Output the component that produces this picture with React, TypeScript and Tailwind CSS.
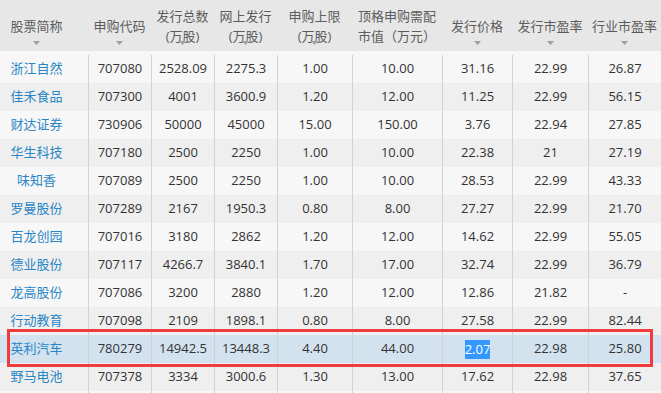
import React from "react";

const cols = "grid grid-cols-[88px_63px_63px_63px_75px_90px_70px_76px_1fr]";

const headers: { lines: string[]; arrow: boolean; pr?: boolean }[] = [
  { lines: ["股票简称"], arrow: true, pr: true },
  { lines: ["申购代码"], arrow: true },
  { lines: ["发行总数", "(万股)"], arrow: true },
  { lines: ["网上发行", "(万股)"], arrow: true },
  { lines: ["申购上限", "(万股)"], arrow: true },
  { lines: ["顶格申购需配", "市值（万元）"], arrow: false },
  { lines: ["发行价格"], arrow: true },
  { lines: ["发行市盈率"], arrow: true },
  { lines: ["行业市盈率"], arrow: true },
];

const rows: string[][] = [
  ["浙江自然", "707080", "2528.09", "2275.3", "1.00", "10.00", "31.16", "22.99", "26.87"],
  ["佳禾食品", "707300", "4001", "3600.9", "1.20", "12.00", "11.25", "22.99", "56.15"],
  ["财达证券", "730906", "50000", "45000", "15.00", "150.00", "3.76", "22.94", "27.85"],
  ["华生科技", "707180", "2500", "2250", "1.00", "10.00", "22.38", "21", "27.19"],
  ["味知香", "707089", "2500", "2250", "1.00", "10.00", "28.53", "22.99", "43.33"],
  ["罗曼股份", "707289", "2167", "1950.3", "0.80", "8.00", "27.27", "22.99", "21.70"],
  ["百龙创园", "707016", "3180", "2862", "1.20", "12.00", "14.62", "22.99", "55.05"],
  ["德业股份", "707117", "4266.7", "3840.1", "1.70", "17.00", "32.74", "22.99", "36.79"],
  ["龙高股份", "707086", "3200", "2880", "1.20", "12.00", "12.86", "21.82", "-"],
  ["行动教育", "707098", "2109", "1898.1", "0.80", "8.00", "27.58", "22.99", "82.44"],
  ["英利汽车", "780279", "14942.5", "13448.3", "4.40", "44.00", "2.07", "22.98", "25.80"],
  ["野马电池", "707378", "3334", "3000.6", "1.30", "13.00", "17.62", "22.98", "37.65"],
  ["", "", "", "", "", "", "", "", ""],
];

function Arrow() {
  return (
    <span className="absolute left-0 right-0 top-[41px] flex justify-center">
      <svg width="7" height="4" viewBox="0 0 7 4">
        <path d="M0 0 L7 0 L3.5 4 Z" fill="#a0a0a0" />
      </svg>
    </span>
  );
}

export default function App() {
  return (
    <div className="relative h-[393px] w-[661px] overflow-hidden bg-[#f7f7f7] font-['Open_Sans','Noto_Sans_CJK_SC',sans-serif] text-[13px]">
      <div className={`${cols} h-[51px] bg-[#e7e7e7] text-[#5c5c5c]`}>
        {headers.map((h, i) => (
          <div
            key={i}
            className={`relative flex flex-col items-center justify-center leading-[20px] ${h.pr ? "pr-[15px]" : ""}`}
          >
            {h.lines.map((l, j) => (
              <span key={j} className="whitespace-nowrap">
                {l}
              </span>
            ))}
            {h.arrow && (
              <span className={`absolute top-[41px] flex justify-center ${h.pr ? "left-0 right-[15px]" : "left-0 right-0"}`}>
                <svg width="7" height="4" viewBox="0 0 7 4">
                  <path d="M0 0 L7 0 L3.5 4 Z" fill="#a0a0a0" />
                </svg>
              </span>
            )}
          </div>
        ))}
      </div>
      {rows.map((r, ri) => {
        const highlighted = ri === 10;
        const bg = highlighted ? "bg-[#d3e2ef]" : ri % 2 === 0 ? "bg-[#f7f7f7]" : "bg-[#efefef]";
        const first = ri === 0;
        return (
          <div key={ri} className={`${cols} ${bg} ${first ? "h-[32px] pt-[4px]" : "h-[28px]"}`}>
            {r.map((c, ci) => (
              <div
                key={ci}
                className={`flex items-center justify-center whitespace-nowrap ${ci > 0 ? "border-l border-[#d2d2d2]" : "pr-[15px]"} ${ci === 0 ? "text-[#2986c6]" : "text-[#333333]"}`}
              >
                {highlighted && ci === 6 ? (
                  <span className="bg-[#3399ff] text-white leading-[19px]">{c}</span>
                ) : (
                  c
                )}
              </div>
            ))}
          </div>
        );
      })}
      <div className="pointer-events-none absolute left-[7px] top-[329px] h-[38px] w-[646px] border-[3px] border-[#f03c3c]" />
    </div>
  );
}
